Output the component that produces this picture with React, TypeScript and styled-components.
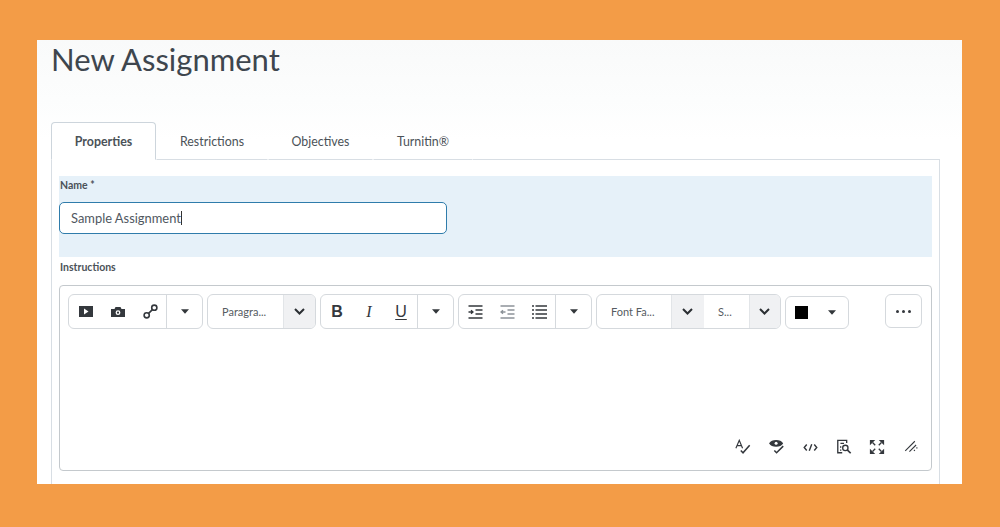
import styled, { createGlobalStyle } from 'styled-components';
import type { ReactNode } from 'react';

const GlobalStyle = createGlobalStyle`
  html, body {
    margin: 0;
    height: 100%;
    background: #f39c47;
    font-family: Lato, "Open Sans", sans-serif;
  }
`;

function Icon({ children, size = 18, view = 18 }: { children: ReactNode; size?: number; view?: number }) {
  return (
    <svg width={size} height={size} viewBox={`0 0 ${view} ${view}`} fill="none" stroke="#34383d" strokeWidth="1.5">
      {children}
    </svg>
  );
}

function Caret() {
  return (
    <svg width="8" height="5" viewBox="0 0 8 5">
      <path d="M0 0.3h8L4 4.7z" fill="#33373b" />
    </svg>
  );
}

function Chevron() {
  return (
    <ChevronMark width="11" height="7" viewBox="0 0 11 7" fill="none">
      <path d="M1 1l4.5 4.5L10 1" stroke="#2b2f33" strokeWidth="2" />
    </ChevronMark>
  );
}

const IndentLines = ({ color = '#34383d', out = false }: { color?: string; out?: boolean }) => (
  <svg width="15" height="14" viewBox="0 0 15 14" fill="none" stroke={color} strokeWidth="1.3">
    <path d="M0.5 1h14M7.5 5h7M7.5 9h7M0.5 13h14" />
    {out ? <path d="M5.5 7H1M3 5.2L1 7l2 1.8" /> : <path d="M0.5 7H5M3 5.2L5 7 3 8.8" />}
  </svg>
);

export default function App() {
  return (
    <>
      <GlobalStyle />
      <Frame>
        <Page>
          <Title>New Assignment</Title>
          <Tabs>
            <Tab $active $width={105}>Properties</Tab>
            <Tab $width={112}>Restrictions</Tab>
            <Tab $width={105}>Objectives</Tab>
            <Tab $width={100}>Turnitin®</Tab>
            <TabRest />
          </Tabs>
          <Sheet>
            <NameBlock>
              <Label>Name *</Label>
              <NameInput>
                Sample Assignment<Cursor />
              </NameInput>
            </NameBlock>
            <InstructionsLabel>Instructions</InstructionsLabel>
            <Editor>
              <Toolbar>
                <Group $width={135}>
                  <IconCell $width={33}>
                    <svg width="14" height="11" viewBox="0 0 14 11">
                      <path d="M0 0h14v11H0z" fill="#34383d" />
                      <path d="M5 2.5l4.5 3-4.5 3z" fill="#fff" />
                    </svg>
                  </IconCell>
                  <IconCell $width={32}>
                    <svg width="14" height="10" viewBox="0 0 14 10">
                      <path d="M0 2h3.5l1-2h5l1 2H14v8H0z" fill="#34383d" />
                      <circle cx="7" cy="5.7" r="2.4" fill="#fff" />
                      <circle cx="7" cy="5.7" r="1.1" fill="#34383d" />
                    </svg>
                  </IconCell>
                  <IconCell $width={32}>
                    <svg width="15" height="15" viewBox="0 0 15 15" fill="none" stroke="#34383d" strokeWidth="1.6">
                      <circle cx="3.7" cy="11.3" r="2.6" />
                      <circle cx="11.3" cy="3.7" r="2.6" />
                      <path d="M5.6 9.4l3.8-3.8" />
                    </svg>
                  </IconCell>
                  <CaretCell $width={36}><Caret /></CaretCell>
                </Group>
                <Group $width={109}>
                  <SelectText $width={75}>Paragra...</SelectText>
                  <ChevronCell $width={32}><Chevron /></ChevronCell>
                </Group>
                <Group $width={134}>
                  <LetterCell $width={32} $bold>B</LetterCell>
                  <LetterCell $width={32} $italic>I</LetterCell>
                  <LetterCell $width={32} $under>U</LetterCell>
                  <CaretCell $width={35}><Caret /></CaretCell>
                </Group>
                <Group $width={134}>
                  <IconCell $width={32}><IndentLines /></IconCell>
                  <IconCell $width={32}><IndentLines color="#8d9399" out /></IconCell>
                  <IconCell $width={32}>
                    <svg width="15" height="14" viewBox="0 0 15 14" fill="none" stroke="#34383d" strokeWidth="1.3">
                      <path d="M3.5 1h11.5M3.5 5h11.5M3.5 9h11.5M3.5 13h11.5M0 1h2M0 5h2M0 9h2M0 13h2" />
                    </svg>
                  </IconCell>
                  <CaretCell $width={35}><Caret /></CaretCell>
                </Group>
                <Group $width={185}>
                  <SelectText $width={74}>Font Fa...</SelectText>
                  <ChevronCell $width={32}><Chevron /></ChevronCell>
                  <SelectText $width={45}>S...</SelectText>
                  <ChevronCell $width={31}><Chevron /></ChevronCell>
                </Group>
                <ColorButton>
                  <Swatch />
                  <Caret />
                </ColorButton>
                <MoreButton aria-label="More">
                  <Dot /><Dot /><Dot />
                </MoreButton>
              </Toolbar>
              <StatusIcons>
                <StatusIcon>
                  <Icon size={16}>
                    <path d="M1 10.5L4.8 1.5l3.7 9M2.4 7.5h4.8" strokeWidth="1.3" />
                    <path d="M6.5 13l2.5 2.5L16.5 7" strokeWidth="1.7" />
                  </Icon>
                </StatusIcon>
                <StatusIcon>
                  <Icon size={16}>
                    <path d="M1 5C3.5 1 12.5 1 15 5 12.5 9 3.5 9 1 5z" fill="#34383d" />
                    <circle cx="8" cy="4.8" r="1.7" fill="#fff" stroke="none" />
                    <path d="M6 13l2.5 2.5L16 8" strokeWidth="1.7" />
                  </Icon>
                </StatusIcon>
                <StatusIcon>
                  <Icon size={15}>
                    <path d="M4.5 5.5L1.5 9l3 3.5M13.5 5.5l3 3.5-3 3.5M10.5 5L7.5 13" strokeWidth="1.7" />
                  </Icon>
                </StatusIcon>
                <StatusIcon>
                  <Icon size={16}>
                    <path d="M7 15.5H2V1.5h10v3M5 5h4M4.5 9h1.5M4.5 12.5h1.5" />
                    <circle cx="10.5" cy="10" r="3" />
                    <path d="M12.7 12.2l3.8 3.8" strokeWidth="1.9" />
                  </Icon>
                </StatusIcon>
                <StatusIcon>
                  <Icon size={16}>
                    <path d="M1 1h6L1 7zM17 1v6l-6-6zM1 17v-6l6 6zM17 17h-6l6-6z" fill="#34383d" stroke="none" />
                    <path d="M4 4l3 3M14 4l-3 3M4 14l3-3M14 14l-3-3" />
                  </Icon>
                </StatusIcon>
                <StatusIcon>
                  <Icon size={15}>
                    <path d="M1.5 13L13 1.5M6.5 14L14.5 6" strokeWidth="1.3" />
                    <path d="M12 13l1-1M15 10l1-1" strokeWidth="1.5" />
                  </Icon>
                </StatusIcon>
              </StatusIcons>
            </Editor>
          </Sheet>
        </Page>
      </Frame>
    </>
  );
}

const Frame = styled.div`
  box-sizing: border-box;
  width: 1000px;
  height: 527px;
  padding: 40px 38px 43px 37px;
  overflow: hidden;
`;

const Page = styled.main`
  height: 444px;
  padding: 0 22px 0 14px;
  overflow: hidden;
  display: flex;
  flex-direction: column;
  background: linear-gradient(#f9fafa 0, #fcfdfd 60px, #ffffff 100px);
`;

const Title = styled.h1`
  margin: 0;
  height: 82px;
  font-size: 31px;
  line-height: 38px;
  font-weight: 400;
  color: #3e464e;
`;

const Tabs = styled.div`
  display: flex;
  height: 38px;
`;

const Tab = styled.div<{ $active?: boolean; $width: number }>`
  box-sizing: border-box;
  width: ${p => p.$width}px;
  display: flex;
  align-items: center;
  justify-content: center;
  font-size: 12.4px;
  color: #4b5258;
  font-weight: ${p => (p.$active ? 700 : 400)};
  background: ${p => (p.$active ? '#fff' : 'transparent')};
  border: 1px solid ${p => (p.$active ? '#cdd5dc' : 'transparent')};
  border-bottom: ${p => (p.$active ? '1px solid #fff' : '1px solid #d8dee4')};
  border-radius: ${p => (p.$active ? '4px 4px 0 0' : '0')};
`;

const TabRest = styled.div`
  flex: none;
  width: 467px;
  border-bottom: 1px solid #d8dee4;
`;

const Sheet = styled.section`
  flex: 1;
  width: 889px;
  box-sizing: border-box;
  padding: 16px 7px 0 7px;
  border-left: 1px solid #d8dee4;
  border-right: 1px solid #d8dee4;
`;

const NameBlock = styled.div`
  height: 81px;
  box-sizing: border-box;
  padding-top: 3px;
  background: #e6f1f9;
`;

const Label = styled.div`
  padding-left: 1px;
  font-size: 10.5px;
  line-height: 13px;
  font-weight: 700;
  color: #4b5258;
`;

const InstructionsLabel = styled(Label)`
  margin-top: 3px;
  height: 25px;
  line-height: 14px;
`;

const NameInput = styled.div`
  box-sizing: border-box;
  width: 388px;
  height: 32px;
  margin-top: 10px;
  padding-left: 11px;
  display: flex;
  align-items: center;
  font-size: 12.9px;
  color: #50585f;
  background: #fff;
  border: 1.5px solid #2f7cab;
  border-radius: 5px;
`;

const Cursor = styled.span`
  width: 1px;
  height: 14px;
  background: #333;
`;

const Editor = styled.div`
  box-sizing: border-box;
  height: 186px;
  padding: 8px 9px 0 8px;
  border: 1px solid #c4c9cd;
  border-radius: 4px;
  display: flex;
  flex-direction: column;
  justify-content: space-between;
`;

const Toolbar = styled.div`
  display: flex;
  align-items: flex-start;
  gap: 4px;
`;

const Group = styled.div<{ $width: number }>`
  box-sizing: border-box;
  flex: none;
  width: ${p => p.$width}px;
  height: 35px;
  display: flex;
  overflow: hidden;
  border: 1.5px solid #d5d9dd;
  border-radius: 6px;
  background: #fff;
`;

const IconCell = styled.div<{ $width: number }>`
  flex: none;
  width: ${p => p.$width}px;
  display: flex;
  align-items: center;
  justify-content: center;
`;

const CaretCell = styled(IconCell)`
  flex: 1;
  border-left: 1.5px solid #d5d9dd;
`;

const ChevronCell = styled(IconCell)`
  background: #f0f1f3;
  border-left: 1px solid #e2e5e8;
`;

const ChevronMark = styled.svg`
  margin-right: 2px;
`;

const LetterCell = styled(IconCell)<{ $bold?: boolean; $italic?: boolean; $under?: boolean }>`
  font-size: 16px;
  color: #34383d;
  font-weight: ${p => (p.$bold ? 700 : 400)};
  font-style: ${p => (p.$italic ? 'italic' : 'normal')};
  font-family: ${p => (p.$italic ? '"Liberation Serif", serif' : '"Liberation Sans", Arial, sans-serif')};
  text-decoration: ${p => (p.$under ? 'underline' : 'none')};
  text-underline-offset: 2px;
`;

const SelectText = styled.div<{ $width: number }>`
  box-sizing: border-box;
  flex: none;
  width: ${p => p.$width}px;
  padding-left: 14px;
  display: flex;
  align-items: center;
  white-space: nowrap;
  font-size: 11px;
  color: #565c62;
`;

const ColorButton = styled.div`
  box-sizing: border-box;
  flex: none;
  width: 64px;
  height: 33px;
  margin-top: 2px;
  padding: 0 12px 0 9px;
  display: flex;
  align-items: center;
  justify-content: space-between;
  border: 1.5px solid #d5d9dd;
  border-radius: 6px;
`;

const Swatch = styled.span`
  width: 13px;
  height: 13px;
  background: #000;
`;

const MoreButton = styled.div`
  box-sizing: border-box;
  flex: none;
  width: 37px;
  height: 34px;
  margin-left: 32px;
  display: flex;
  align-items: center;
  justify-content: center;
  gap: 3px;
  border: 1.5px solid #d5d9dd;
  border-radius: 6px;
`;

const Dot = styled.span`
  width: 3px;
  height: 3px;
  border-radius: 50%;
  background: #34383d;
`;

const StatusIcons = styled.div`
  display: flex;
  justify-content: flex-end;
  padding: 0 2px 14px 0;
  gap: 15.6px;
`;

const StatusIcon = styled.div`
  width: 18px;
  height: 18px;
  display: flex;
  align-items: center;
  justify-content: center;
`;
